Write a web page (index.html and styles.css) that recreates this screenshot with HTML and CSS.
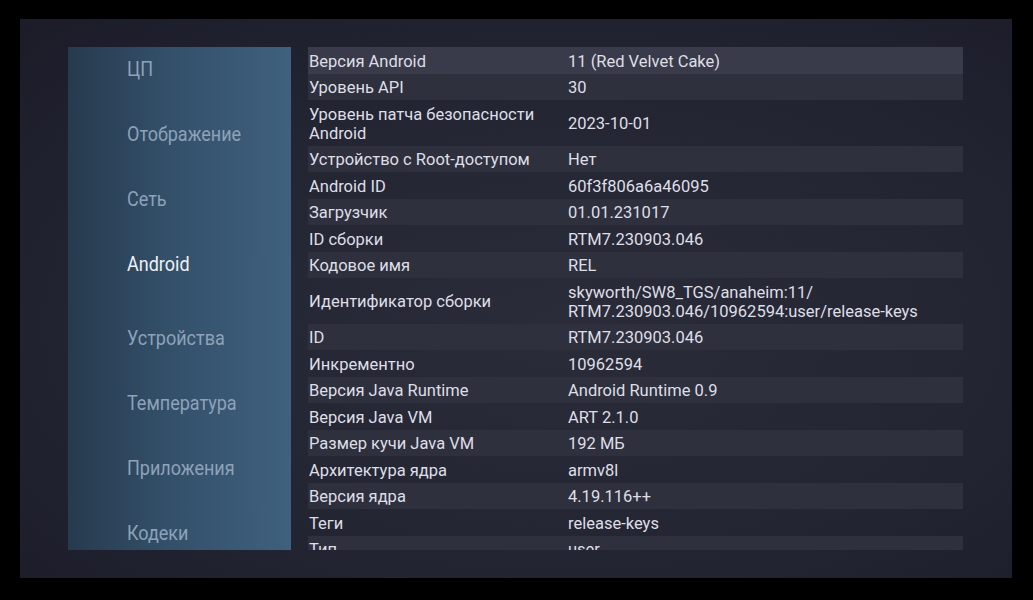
FILE: index.html
```html
<!DOCTYPE html>
<html lang="ru">
  <head>
    <meta charset="UTF-8" />
    <meta name="viewport" content="width=device-width, initial-scale=1.0" />
    <title>Android</title>
    <link rel="stylesheet" href="styles.css">
  </head>
  <body>
    <div class="screen">
      <div class="menu">
        <ul>
          <li>ЦП</li>
          <li>Отображение</li>
          <li>Сеть</li>
          <li class="active">Android</li>
          <li>Устройства</li>
          <li>Температура</li>
          <li>Приложения</li>
          <li>Кодеки</li>
        </ul>
      </div>
      <div class="details">
        <div class="row focus"><div class="label">Версия Android</div><div class="value">11 (Red Velvet Cake)</div></div>
        <div class="row odd"><div class="label">Уровень API</div><div class="value">30</div></div>
        <div class="row"><div class="label">Уровень патча безопасности<br>Android</div><div class="value">2023-10-01</div></div>
        <div class="row odd"><div class="label">Устройство с Root-доступом</div><div class="value">Нет</div></div>
        <div class="row"><div class="label">Android ID</div><div class="value">60f3f806a6a46095</div></div>
        <div class="row odd"><div class="label">Загрузчик</div><div class="value">01.01.231017</div></div>
        <div class="row"><div class="label">ID сборки</div><div class="value">RTM7.230903.046</div></div>
        <div class="row odd"><div class="label">Кодовое имя</div><div class="value">REL</div></div>
        <div class="row"><div class="label">Идентификатор сборки</div><div class="value">skyworth/SW8_TGS/anaheim:11/<br>RTM7.230903.046/10962594:user/release-keys</div></div>
        <div class="row odd"><div class="label">ID</div><div class="value">RTM7.230903.046</div></div>
        <div class="row"><div class="label">Инкрементно</div><div class="value">10962594</div></div>
        <div class="row odd"><div class="label">Версия Java Runtime</div><div class="value">Android Runtime 0.9</div></div>
        <div class="row"><div class="label">Версия Java VM</div><div class="value">ART 2.1.0</div></div>
        <div class="row odd"><div class="label">Размер кучи Java VM</div><div class="value">192 МБ</div></div>
        <div class="row"><div class="label">Архитектура ядра</div><div class="value">armv8l</div></div>
        <div class="row odd"><div class="label">Версия ядра</div><div class="value">4.19.116++</div></div>
        <div class="row"><div class="label">Теги</div><div class="value">release-keys</div></div>
        <div class="row odd"><div class="label">Тип</div><div class="value">user</div></div>
      </div>
    </div>
  </body>
</html>
```

FILE: styles.css
```css
body {
  margin: 0;
  background-color: black;
  font-family: Roboto, "Noto Sans", sans-serif;
}

.screen {
  width: 992px;
  height: 559px;
  margin: 19px 0 0 20px;
  padding: 28px 0 0 48px;
  box-sizing: border-box;
  display: flex;
  align-items: flex-start;
  gap: 17px;
  background: radial-gradient(ellipse at 55% 55%, #2b2c3a 0%, #242533 55%, #1b1c28 100%);
}

.menu {
  width: 223px;
  height: 503px;
  overflow: hidden;
  background: linear-gradient(90deg, #273a4e 0%, #33506a 45%, #3f607e 100%);
}
.menu ul {
  list-style: none;
  margin: 0;
  padding: 10px 0 0 59px;
}
.menu li {
  font-size: 20px;
  line-height: 24px;
  margin-bottom: 41px;
  color: #8ea2b8;
  transform: scaleX(0.9);
  transform-origin: left center;
}
.menu li.active {
  color: #eef0f6;
  margin-bottom: 50px;
}

.details {
  width: 655px;
  height: 503px;
  overflow: hidden;
}
.row {
  display: flex;
  align-items: center;
  padding: 4.75px 0 2.75px;
  font-size: 16.5px;
  line-height: 19px;
  color: #dedfe6;
}
.row.odd {
  background-color: #2f303e;
}
.row.focus {
  background-color: #3a3b4a;
}
.label {
  width: 259px;
  padding-left: 1px;
  flex-shrink: 0;
}
.value {
  flex: 1;
}
```
